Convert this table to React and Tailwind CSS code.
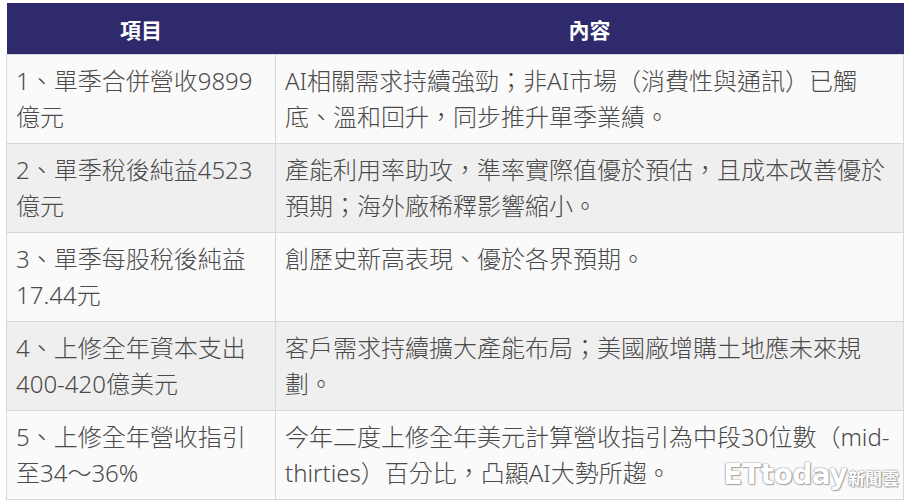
const rows = [
  {
    item: ['1、單季合併營收9899', '億元'],
    content: ['AI相關需求持續強勁；非AI市場（消費性與通訊）已觸', '底、溫和回升，同步推升單季業績。'],
  },
  {
    item: ['2、單季稅後純益4523', '億元'],
    content: ['產能利用率助攻，準率實際值優於預估，且成本改善優於', '預期；海外廠稀釋影響縮小。'],
  },
  {
    item: ['3、單季每股稅後純益', '17.44元'],
    content: ['創歷史新高表現、優於各界預期。'],
  },
  {
    item: ['4、上修全年資本支出', '400-420億美元'],
    content: ['客戶需求持續擴大產能布局；美國廠增購土地應未來規', '劃。'],
  },
  {
    item: ['5、上修全年營收指引', '至34～36%'],
    content: ['今年二度上修全年美元計算營收指引為中段30位數（mid-', 'thirties）百分比，凸顯AI大勢所趨。'],
  },
]

function Lines({ lines }) {
  return lines.map((l, i) => (
    <div key={i} className="whitespace-nowrap">{l}</div>
  ))
}

export default function App() {
  return (
    <div
      lang="zh-Hant-TW"
      className="relative w-[905px] h-[501px] bg-white overflow-hidden pt-[3px] pl-[6px] font-['Noto_Sans','Noto_Sans_CJK_TC',sans-serif]"
    >
      <table className="w-[898px] border-collapse table-fixed">
        <colgroup>
          <col className="w-[269px]" />
          <col />
        </colgroup>
        <thead>
          <tr className="h-[51px] bg-[#2e2a6c] text-white">
            <th className="text-[21px] font-bold text-center pt-[5px]">項目</th>
            <th className="text-[21px] font-bold text-center pt-[5px]">內容</th>
          </tr>
        </thead>
        <tbody className="text-[24px] leading-[36px] font-light text-[#4a4a4a]">
          {rows.map((r, i) => (
            <tr key={i} className={i % 2 === 0 ? 'bg-[#fafafa] h-[88px]' : 'bg-[#efefef] h-[88px]'}>
              <td className="align-top border border-[#d8d8d8] px-[9px] pt-[8px] pb-[8px]">
                <Lines lines={r.item} />
              </td>
              <td className="align-top border border-[#d8d8d8] px-[9px] pt-[8px] pb-[8px]">
                <Lines lines={r.content} />
              </td>
            </tr>
          ))}
        </tbody>
      </table>

      <div className="absolute right-[6px] bottom-[12px] flex items-end text-white [text-shadow:0_0_1px_#8a8a8a,0_0_2px_#9a9a9a,1px_1px_1px_#aaaaaa]">
        <span className="text-[28px] leading-none font-bold tracking-[-0.5px] font-['DejaVu_Sans',sans-serif]">
          ETtoday
        </span>
        <span className="text-[17px] leading-none font-bold ml-[1px] mb-[2px]">新聞雲</span>
      </div>
    </div>
  )
}
